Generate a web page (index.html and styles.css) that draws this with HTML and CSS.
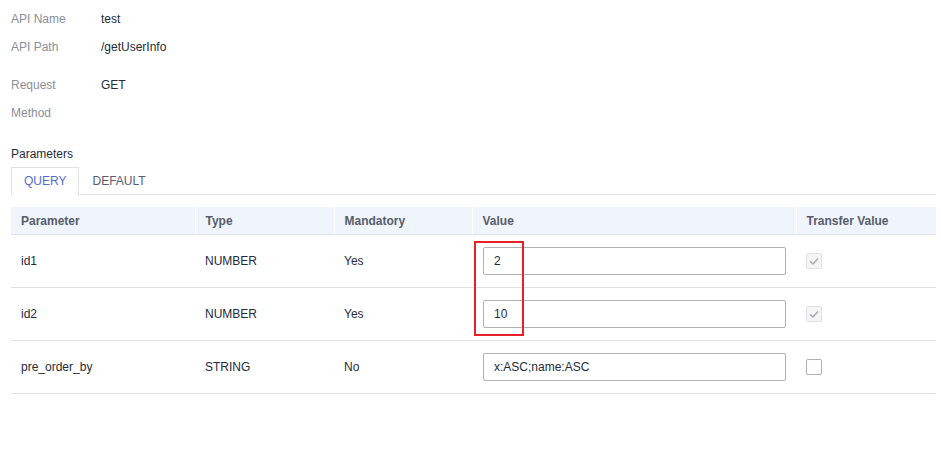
FILE: index.html
```html
<!DOCTYPE html>
<html>
<head>
<meta charset="utf-8">
<link rel="stylesheet" href="styles.css">
</head>
<body>
<div class="page">
  <div class="info">
    <div class="info-row"><div class="label">API Name</div><div class="value">test</div></div>
    <div class="info-row"><div class="label">API Path</div><div class="value">/getUserInfo</div></div>
    <div class="info-row spaced"><div class="label">Request Method</div><div class="value">GET</div></div>
  </div>
  <div class="section-title">Parameters</div>
  <div class="tabs">
    <div class="tab active">QUERY</div>
    <div class="tab">DEFAULT</div>
  </div>
  <div class="table-wrap">
    <table class="params">
      <colgroup>
        <col class="c1"><col class="c2"><col class="c3"><col class="c4"><col class="c5">
      </colgroup>
      <thead>
        <tr><th>Parameter</th><th>Type</th><th>Mandatory</th><th>Value</th><th>Transfer Value</th></tr>
      </thead>
      <tbody>
        <tr>
          <td>id1</td><td>NUMBER</td><td>Yes</td>
          <td><div class="input">2</div></td>
          <td><span class="check checked"><svg viewBox="0 0 16 16" width="16" height="16"><path d="M4 8.2 L7 11 L12 5.5" fill="none" stroke="#a6a9b1" stroke-width="1.5"/></svg></span></td>
        </tr>
        <tr>
          <td>id2</td><td>NUMBER</td><td>Yes</td>
          <td><div class="input">10</div></td>
          <td><span class="check checked"><svg viewBox="0 0 16 16" width="16" height="16"><path d="M4 8.2 L7 11 L12 5.5" fill="none" stroke="#a6a9b1" stroke-width="1.5"/></svg></span></td>
        </tr>
        <tr>
          <td>pre_order_by</td><td>STRING</td><td>No</td>
          <td><div class="input">x:ASC;name:ASC</div></td>
          <td><span class="check"></span></td>
        </tr>
      </tbody>
    </table>
    <div class="highlight"></div>
  </div>
</div>
</body>
</html>
```
FILE: styles.css
```css
html, body {
  margin: 0;
  padding: 0;
  background: #ffffff;
}
body {
  font-family: "Liberation Sans", Arial, sans-serif;
  font-size: 12px;
  color: #252b3a;
}
.page {
  padding: 5px 5px 0 11px;
}
.info-row {
  display: flex;
  line-height: 28px;
}
.info-row.spaced {
  margin-top: 10px;
}
.label {
  width: 80px;
  margin-right: 10px;
  color: #8a8e99;
}
.value {
  color: #252b3a;
}
.section-title {
  margin-top: 19px;
  line-height: 16px;
  color: #252b3a;
}
.tabs {
  display: flex;
  margin-top: 5px;
  border-bottom: 1px solid #dfe1e6;
  height: 27px;
}
.tab {
  padding: 0 12px;
  line-height: 27px;
  color: #575d6c;
  border: 1px solid transparent;
  border-bottom: none;
}
.tab.active {
  color: #526ecc;
  border-color: #dfe1e6;
  background: #ffffff;
  height: 27px;
  margin-bottom: -1px;
}
.table-wrap {
  position: relative;
  margin-top: 12px;
}
.params {
  width: 100%;
  border-collapse: collapse;
  table-layout: fixed;
}
.c1 { width: 184px; }
.c2 { width: 139px; }
.c3 { width: 138px; }
.c4 { width: 324px; }
.params th {
  background: #f0f4fb;
  color: #575d6c;
  font-weight: bold;
  text-align: left;
  height: 27px;
  padding: 0 10px;
  border-bottom: 1px solid #dfe1e6;
  border-left: 1px solid #ffffff;
}
.params th:first-child {
  border-left: none;
}
.params td {
  height: 52px;
  padding: 0 10px;
  border-bottom: 1px solid #dfe1e6;
  color: #252b3a;
}
.input {
  height: 26px;
  line-height: 26px;
  margin-left: 1px;
  border: 1px solid #adb0b8;
  border-radius: 2px;
  padding: 0 10px;
  color: #252b3a;
}
.check {
  display: block;
  width: 14px;
  height: 14px;
  border: 1px solid #adb0b8;
  border-radius: 2px;
  background: #ffffff;
  position: relative;
}
.check.checked {
  background: #f5f5f6;
  border-color: #dfe1e6;
}
.check svg {
  position: absolute;
  left: -1px;
  top: -1px;
}
.highlight {
  position: absolute;
  left: 463px;
  top: 34px;
  width: 46px;
  height: 91px;
  border: 2px solid #e8202a;
}
```
